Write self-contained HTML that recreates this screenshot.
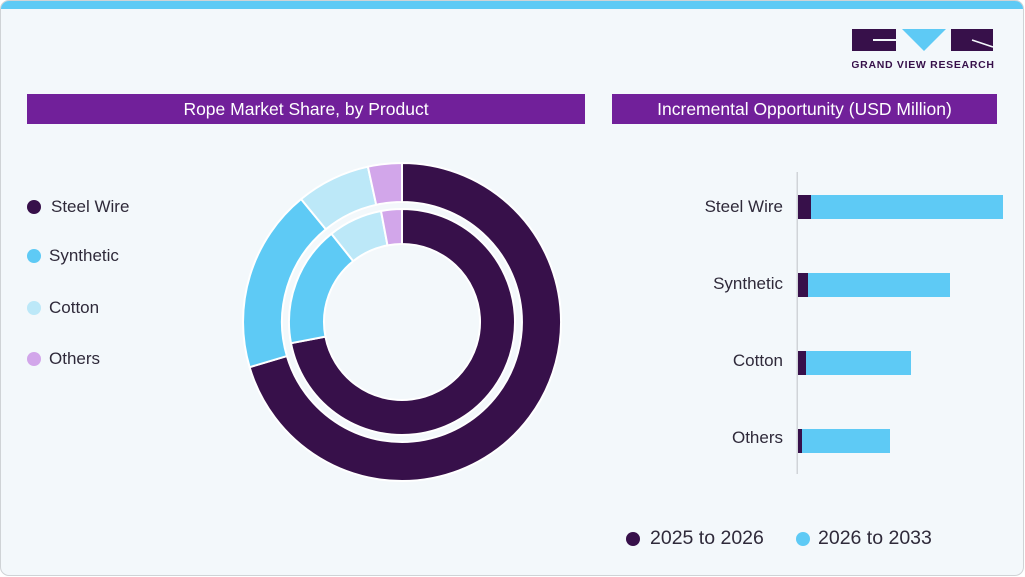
<!DOCTYPE html>
<html><head><meta charset="utf-8"><style>
*{margin:0;padding:0;box-sizing:border-box}
body{width:1025px;height:577px;background:#fff;font-family:"Liberation Sans",sans-serif;position:relative;overflow:hidden}
.card{position:absolute;left:0;top:0;width:1024px;height:576px;border:1.5px solid #cfd3d6;border-radius:9px;background:#f3f8fb;overflow:hidden}
.strip{position:absolute;left:0;top:0;right:0;height:8px;background:#5ecaf5}
.hdr{position:absolute;top:94px;height:30px;background:#71209a;color:#fff;font-size:17.5px;line-height:30px;text-align:center}
.lg{position:absolute;font-size:17px;color:#2f2a3a}
.dot{position:absolute;width:14px;height:14px;border-radius:50%}
.bl{position:absolute;font-size:17px;color:#2f2a3a;text-align:right;width:120px}
.bar{position:absolute;height:24px}
</style></head><body>
<div class="card"><div class="strip"></div></div>
<div class="hdr" style="left:27px;width:558px">Rope Market Share, by Product</div>
<div class="hdr" style="left:612px;width:385px">Incremental Opportunity (USD Million)</div>

<svg style="position:absolute;left:852px;top:29px" width="143" height="42">
<rect x="0" y="0" width="44" height="22" fill="#37104a"/>
<rect x="21" y="10" width="23" height="2" fill="#f3f8fb"/>
<polygon points="50,0 94,0 72,22" fill="#5ecaf5"/>
<rect x="99" y="0" width="42" height="22" fill="#37104a"/>
<line x1="120" y1="11" x2="141" y2="18" stroke="#f3f8fb" stroke-width="1.5"/>
<text x="71" y="39" font-size="10.5" font-weight="bold" fill="#37104a" text-anchor="middle" font-family="Liberation Sans" letter-spacing="0.7">GRAND VIEW RESEARCH</text>
</svg>

<div class="dot" style="left:27px;top:200px;background:#37104a"></div><div class="lg" style="left:51px;top:197px">Steel Wire</div>
<div class="dot" style="left:27px;top:249px;background:#5ecaf5"></div><div class="lg" style="left:49px;top:246px">Synthetic</div>
<div class="dot" style="left:27px;top:301px;background:#bce8f8"></div><div class="lg" style="left:49px;top:298px">Cotton</div>
<div class="dot" style="left:27px;top:352px;background:#d2a6ea"></div><div class="lg" style="left:49px;top:349px">Others</div>

<svg style="position:absolute;left:0;top:0" width="1025" height="577">
<g stroke="#fff" stroke-width="2" stroke-linejoin="round">
<path d="M402,163 A159,159 0 1 1 249.6,367.2 L286.9,356.1 A120,120 0 1 0 402,202 Z" fill="#37104a"/>
<path d="M249.6,367.2 A159,159 0 0 1 301.1,199.1 L325.8,229.3 A120,120 0 0 0 286.9,356.1 Z" fill="#5ecaf5"/>
<path d="M301.1,199.1 A159,159 0 0 1 367.9,166.7 L376.2,204.8 A120,120 0 0 0 325.8,229.3 Z" fill="#bce8f8"/>
<path d="M367.9,166.7 A159,159 0 0 1 402,163 L402,202 A120,120 0 0 0 376.2,204.8 Z" fill="#d2a6ea"/>
<path d="M402,209 A113,113 0 1 1 291.0,343.2 L325.4,336.6 A78,78 0 1 0 402,244 Z" fill="#37104a"/>
<path d="M291.0,343.2 A113,113 0 0 1 331.4,233.8 L353.2,261.1 A78,78 0 0 0 325.4,336.6 Z" fill="#5ecaf5"/>
<path d="M331.4,233.8 A113,113 0 0 1 381.0,211.0 L387.5,245.4 A78,78 0 0 0 353.2,261.1 Z" fill="#bce8f8"/>
<path d="M381.0,211.0 A113,113 0 0 1 402,209 L402,244 A78,78 0 0 0 387.5,245.4 Z" fill="#d2a6ea"/>
</g>
<rect x="796.5" y="172" width="1.5" height="302" fill="#d0d4d8"/>
</svg>

<div class="bl" style="left:663px;top:197px">Steel Wire</div>
<div class="bar" style="left:798px;top:195px;width:13px;background:#37104a"></div>
<div class="bar" style="left:811px;top:195px;width:192px;background:#5ecaf5"></div>
<div class="bl" style="left:663px;top:274px">Synthetic</div>
<div class="bar" style="left:798px;top:273px;width:10px;background:#37104a"></div>
<div class="bar" style="left:808px;top:273px;width:142px;background:#5ecaf5"></div>
<div class="bl" style="left:663px;top:351px">Cotton</div>
<div class="bar" style="left:798px;top:351px;width:8px;background:#37104a"></div>
<div class="bar" style="left:806px;top:351px;width:105px;background:#5ecaf5"></div>
<div class="bl" style="left:663px;top:428px">Others</div>
<div class="bar" style="left:798px;top:429px;width:4px;background:#37104a"></div>
<div class="bar" style="left:802px;top:429px;width:88px;background:#5ecaf5"></div>

<div class="dot" style="left:626px;top:532px;background:#37104a"></div><div class="lg" style="left:650px;top:527px;font-size:19.5px">2025 to 2026</div>
<div class="dot" style="left:796px;top:532px;background:#5ecaf5"></div><div class="lg" style="left:818px;top:527px;font-size:19.5px">2026 to 2033</div>
</body></html>
